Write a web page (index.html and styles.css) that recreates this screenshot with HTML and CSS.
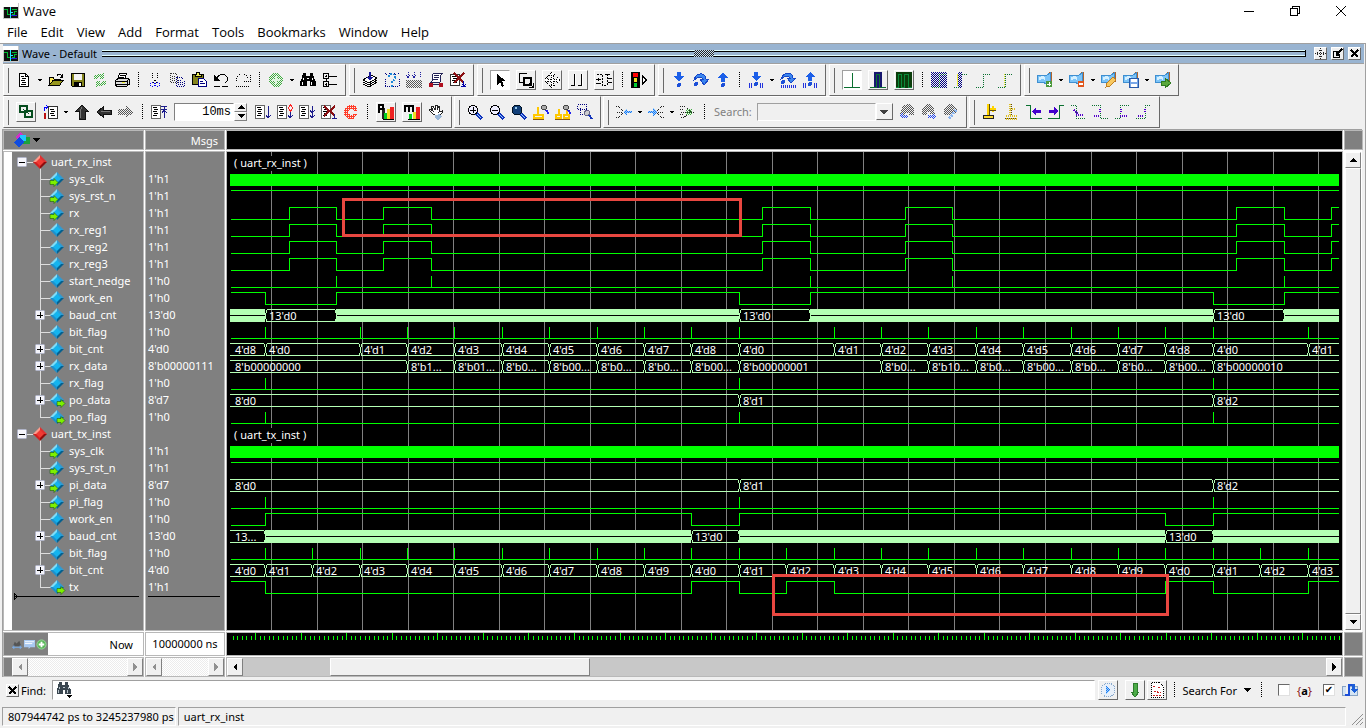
FILE: index.html
```html
<!DOCTYPE html>
<html lang="en">
<head>
    <meta charset="UTF-8">
    <title>Wave</title>
    <link rel="stylesheet" href="styles.css">
</head>
<body>
<svg class="sprite" aria-hidden="true">
    <defs>
        <pattern id="p-gray" width="2" height="2" patternUnits="userSpaceOnUse"><path d="M0 0h1v1h-1zM1 1h1v1h-1z" fill="#555"/></pattern>
        <pattern id="p-green" width="2" height="2" patternUnits="userSpaceOnUse"><path d="M0 0h1v1h-1zM1 1h1v1h-1z" fill="#3fae3f"/></pattern>
        <pattern id="p-navy" width="2" height="2" patternUnits="userSpaceOnUse"><path d="M0 0h1v1h-1zM1 1h1v1h-1z" fill="#000080"/></pattern>
        <pattern id="p-blue" width="2" height="2" patternUnits="userSpaceOnUse"><path d="M0 0h1v1h-1zM1 1h1v1h-1z" fill="#2244ee"/></pattern>
        <pattern id="p-sky" width="2" height="2" patternUnits="userSpaceOnUse"><path d="M0 0h2v2h-2z" fill="#9cd0ff"/><path d="M0 0h1v1h-1zM1 1h1v1h-1z" fill="#1c78f0"/></pattern>
        <pattern id="p-red" width="2" height="2" patternUnits="userSpaceOnUse"><path d="M0 0h2v1h-1v1h-1z" fill="#ff3c28"/></pattern>
    </defs>
    <symbol id="i-app" viewBox="0 0 16 16"><path fill="#c8c8c8" d="M0 0h16v16H0z"/><path fill="#fff" d="M0 0h15v4H0z"/><path fill="#111" d="M1 4h14v11H1z"/><path fill="none" stroke="#0b3" d="M1 6.500h3v5h3M9 6.500h5M9 11.500h2v-3h3"/><path fill="none" stroke="#2ef" d="M7.500 4v11M8 9.500h2"/><path fill="none" stroke="#22d" d="M8 12.500h6"/></symbol>
    <symbol id="i-new" viewBox="0 0 16 16"><path d="M3.500 1.500h6l3 3v10h-9z" fill="#fff" stroke="#000"/><path d="M9.500 1.500v3h3M5 4.500h3M6 6.500h4M5 8.500h4M6 10.500h4M5 12.500h5" fill="none" stroke="#000"/></symbol>
    <symbol id="i-open" viewBox="0 0 16 16"><path d="M1 13V5h4l1 2h6v2" fill="#ffec5c" stroke="#000"/><path d="M1 13.500 5 8.500h10l-3.500 5z" fill="#96961c" stroke="#000"/><path d="M9 3.500q3-3 5 1M14.500 2v3h-3" fill="none" stroke="#000"/></symbol>
    <symbol id="i-save" viewBox="0 0 16 16"><path d="M1.500 1.500h13v13h-12l-1-1z" fill="#84841c" stroke="#000"/><path d="M4 2h8v6H4z" fill="#f4f4f4"/><path d="M4 10h8v4H4z"/><path d="M9 11h2v3H9z" fill="#fff"/></symbol>
    <symbol id="i-reload" viewBox="0 0 16 16"><path d="M1 7q2-6 8-5l3-1v6H7l2-2q-3 0-4 2zM15 9q-2 6-8 5l-3 1V9h5l-2 2q3 0 4-2z" fill="url(#p-green)"/></symbol>
    <symbol id="i-print" viewBox="0 0 16 16"><path d="M5.500 1.500h7l-2 6h-7z" fill="#fff" stroke="#000"/><path d="M6 3.500h5M5 5.500h5" stroke="#000"/><path d="M1.500 8.500 4 6.500h10l1 1v5l-3 2H2.500l-1-2z" fill="#ddd" stroke="#000"/><path d="M1 9.500h12M2 12.500h11M13.500 8v6" stroke="#000"/><path d="M8 10h3v1H8z" fill="#ee3"/></symbol>
    <symbol id="i-cut" viewBox="0 0 16 16"><g fill="none" stroke-dasharray="1 1"><path d="M5.500 1v4l4 6M10.500 1v4l-4 6" stroke="#000"/><circle cx="5.500" cy="12.500" r="2" stroke="#00f"/><circle cx="10.500" cy="12.500" r="2" stroke="#00f"/></g></symbol>
    <symbol id="i-copy" viewBox="0 0 16 16"><g fill="none" stroke-dasharray="1 1"><path d="M1.500 1.500h5l2 2v7h-7zM3 4.500h3M3 6.500h4M3 8.500h4" stroke="#333"/><path d="M7.500 5.500h5l3 3v6h-8zM9 8.500h3M9 10.500h5M9 12.500h5" stroke="#000080"/></g></symbol>
    <symbol id="i-paste" viewBox="0 0 16 16"><path d="M1.500 2.500h11v10h-11z" fill="#84841c" stroke="#000"/><path d="M4 2.500h1l1-2h2l1 2h1v2H4z" fill="#ee5" stroke="#000"/><path d="M7.500 6.500h5l3 3v5h-8z" fill="#fff" stroke="#000080"/><path d="M9 9.500h3M9 11.500h5" stroke="#000080"/></symbol>
    <symbol id="i-undo" viewBox="0 0 16 16"><path d="M4 6q3-5 8-3 5 4 0 8" fill="none" stroke="#000"/><path d="M1 3v6h6z"/><path d="M9 14.500h6M1 14.500h6" stroke="#000"/></symbol>
    <symbol id="i-redo" viewBox="0 0 16 16"><g fill="none" stroke="#000" stroke-dasharray="1 1"><path d="M13 6Q8-1 3 4q-3 4 0 7M15.500 3v6H9M1 14.500h14"/></g></symbol>
    <symbol id="i-plus" viewBox="0 0 16 16"><circle cx="8" cy="8" r="7" fill="url(#p-green)"/><path d="M7 4h2v3h3v2H9v3H7V9H4V7h3z" fill="#dff5df"/></symbol>
    <symbol id="i-find" viewBox="0 0 16 16"><path d="M3 1h3v3h4V1h3l1 5 2 4v4h-6V9H7v5H0v-4l2-4z"/><path d="M3.500 6v2M2.500 10v3M12.500 6v2M11.500 10v3M7 6.500h2" stroke="#fff"/></symbol>
    <symbol id="i-find2" viewBox="0 0 16 16"><path d="M3 0h3v3h3V0h3l1 5 2 3v4H9V8H7v4H1V8l1-3z" fill="#3a4650"/><path d="M3.500 5v2M2.500 8v3M12.500 5v2M11.500 8v3M7 5.500h2" stroke="#b8c4cc"/><path d="M11 13h5l-2.500 3z"/></symbol>
    <symbol id="i-tree" viewBox="0 0 16 16"><path d="M1.500 1.500h5v5h-5zM1.500 9.500h5v5h-5zM7 4.500h8M7 12.500h8M3 4.500h2M3 12.500h2M4.500 7v3M4.500 3v2M4.500 11v3" fill="none" stroke="#000"/></symbol>
    <symbol id="i-stack" viewBox="0 0 16 16"><path d="M1 12l6 3 8-5M1 10l6 3 8-5M1 8l6 3 8-5-6-3z" fill="#fff" stroke="#000"/><path d="M7 0h2v5h2L8 9 5 5h2z" fill="#1a1a9a"/></symbol>
    <symbol id="i-ask" viewBox="0 0 16 16"><path d="M1 14.500h14M1.500 7v7M15.500 7v7M1 1l2 2M5 1l2 2M10 1l2 2M14 1l1 2" stroke="#000080" stroke-dasharray="1 1" fill="none"/><path d="M5 5q0-3 3-3t3 3-3 4v2M8 13v2" fill="none" stroke="#1c86d8" stroke-width="2" stroke-dasharray="2 1"/></symbol>
    <symbol id="i-rain" viewBox="0 0 16 16"><path d="M2.500 0v5M8.500 0v5M14.500 0v5M0 3l2 3 2-3M6 3l2 3 2-3" fill="none" stroke="#2020a0" stroke-dasharray="1 1"/><path d="M0 8h16v8H0z" fill="url(#p-gray)"/></symbol>
    <symbol id="i-cart" viewBox="0 0 16 16"><path d="M5 1.500h9q-2 2-2 9H3q2-2 2-9z" fill="#fff" stroke="#225"/><path d="M6 3.500h5M6 5.500h5M5 7.500h5M1 12.500h14" stroke="#225"/><circle cx="3" cy="13" r="2.500" fill="#b01020"/><circle cx="13" cy="13" r="2.500" fill="#b01020"/></symbol>
    <symbol id="i-end" viewBox="0 0 16 16"><path d="M.5 2.500h9v11h-9z" fill="#fff" stroke="#333"/><path d="M2 4.500h4M3 6.500h4M2 8.500h4M3 10.500h4" stroke="#000"/><path d="M4 1l10 10M14 1 4 11" stroke="#8b0f12" stroke-width="2"/><path d="M13.500 9v5M11 14.500h5M12 12l2 2 2-2" stroke="#00a" fill="none"/></symbol>
    <symbol id="i-arrow" viewBox="0 0 16 16"><path d="M5 2v11l3-3 2 5 2-1-2-5h4z"/></symbol>
    <symbol id="i-zoombox" viewBox="0 0 16 16"><path d="M9 1.500H1.500V10H5" fill="none" stroke="#000"/><path d="M6 6h7v7H6z" fill="none" stroke="#000" stroke-width="2"/><path d="M11 11l4 4M15.500 11v4.500H11" stroke="#000" fill="none"/></symbol>
    <symbol id="i-pan" viewBox="0 0 16 16"><path d="M8 0 5 3h2v4H3V5L0 8l3 3V9h4v4H5l3 3 3-3H9V9h4v2l3-3-3-3v2H9V3h2z" fill="#fff" stroke="#000" stroke-dasharray="1 1"/></symbol>
    <symbol id="i-cursors" viewBox="0 0 16 16"><path d="M4.500 2v11M1 13.500h4M11.500 2v11M8 13.500h4" stroke="#000" fill="none"/><path d="M5.500 2v11M12.500 2v12" stroke="#fff"/></symbol>
    <symbol id="i-edit" viewBox="0 0 16 16"><path d="M1 2.500h5.500v11h4M11.500 2v12M9 2.500h6" fill="none" stroke="#000" stroke-dasharray="2 1"/><path d="M0 7.500h5M0 11.500h5M2.500 6v3M12 6.500h4M12 10.500h4" stroke="#000"/></symbol>
    <symbol id="i-light" viewBox="0 0 16 16"><path d="M0 0h9v16H0z"/><circle cx="4.500" cy="3" r="2.500" fill="#f00"/><circle cx="4.500" cy="8" r="2" fill="#ed2"/><circle cx="4.500" cy="13" r="2" fill="#0c3"/><path d="M11.500 4v8l4-4z" fill="#fff" stroke="#000"/></symbol>
    <symbol id="i-down" viewBox="0 0 16 16"><path d="M6 0h4v4h3L8 10 3 4h3z" fill="#1c5fe8"/><circle cx="8" cy="13" r="2" fill="#1c4fd8"/></symbol>
    <symbol id="i-over" viewBox="0 0 16 16"><path d="M1 8Q3 1 9 2q4 1 4 5h3l-5 6-4-6h3Q8 3 1 8z" fill="#3b86ee" stroke="#1746c8"/><circle cx="3" cy="12" r="2" fill="#1c4fd8"/></symbol>
    <symbol id="i-up" viewBox="0 0 16 16"><path d="M6 10h4V6h3L8 0 3 6h3z" fill="#1c5fe8"/><circle cx="8" cy="13" r="2" fill="#1c4fd8"/></symbol>
    <symbol id="i-down2" viewBox="0 0 16 16"><path d="M6 0h4v4h3L8 9 3 4h3z" fill="#1c5fe8"/><circle cx="8" cy="12" r="2" fill="#1c4fd8"/><path d="M1.500 11v5M3.500 11v5M12.500 11v5M14.500 11v5" stroke="#23d"/></symbol>
    <symbol id="i-over2" viewBox="0 0 16 16"><path d="M1 7Q3 1 9 1q4 1 4 5h3l-5 5-4-5h3Q8 2 1 7z" fill="#3b86ee" stroke="#1746c8"/><circle cx="3" cy="10" r="2" fill="#1c4fd8"/><path d="M1 14.500h15" stroke="#23d" stroke-width="3" stroke-dasharray="1 1"/></symbol>
    <symbol id="i-up2" viewBox="0 0 16 16"><path d="M6 9h4V5h3L8 0 3 5h3z" fill="#1c5fe8"/><circle cx="8" cy="12" r="2" fill="#1c4fd8"/><path d="M1.500 11v5M3.500 11v5M12.500 11v5M14.500 11v5" stroke="#23d"/></symbol>
    <symbol id="i-w1" viewBox="0 0 16 16"><path d="M0 15.500h16M8.500 1v14" stroke="#0a7030"/></symbol>
    <symbol id="i-w2" viewBox="0 0 16 16"><path d="M4 0h8v16H4z" fill="#16166e"/><path d="M0 15.500h6.500v-13h3v13H16" fill="none" stroke="#0a7030"/></symbol>
    <symbol id="i-w3" viewBox="0 0 16 16"><path d="M0 0h16v16H0z" fill="#0b3d0b"/><path d="M0 15.500h2.500v-13h3v13h3v-13h4v13H16" fill="none" stroke="#0a8a3a"/></symbol>
    <symbol id="i-s1" viewBox="0 0 16 16"><path d="M0 0h16v16H0z" fill="url(#p-navy)"/><path d="M1 15.500h7.500v-13H15" fill="none" stroke="#0a7030" stroke-dasharray="1 1"/></symbol>
    <symbol id="i-s2" viewBox="0 0 16 16"><path d="M5 0h4v16H5z" fill="url(#p-navy)"/><path d="M4.500 2v12" stroke="#ee3"/><path d="M1 15.500h5M9 2.500h6" stroke="#0a7030" stroke-dasharray="1 1"/></symbol>
    <symbol id="i-s3" viewBox="0 0 16 16"><path d="M1 15.500h7.500v-13H15" fill="none" stroke="#0a7030" stroke-dasharray="1 1"/></symbol>
    <symbol id="i-s4" viewBox="0 0 16 16"><path d="M1 15.500h7.500v-13H15" fill="none" stroke="#0a7030" stroke-dasharray="1 1"/><path d="M7.500 2v13" stroke="#dd2" stroke-dasharray="1 1"/></symbol>
    <symbol id="i-book" viewBox="0 0 16 16"><path d="M12 0h3v10h-3z" fill="#b0642c"/><path d="M0 4l5-1 4 1 4-3v8l-3 3-5-2-5 1z" fill="#7cc4f8" stroke="#3f8fd0"/><path d="M2 5l3-1 3 1v3L5 7 2 8z" fill="#d5f0ff"/></symbol>
    <symbol id="i-book-add" viewBox="0 0 16 16"><use href="#i-book"/><circle cx="12" cy="12" r="3.500" fill="#4c9a3c"/><path d="M12 10v4M10 12h4" stroke="#fff"/></symbol>
    <symbol id="i-book-del" viewBox="0 0 16 16"><use href="#i-book"/><circle cx="12" cy="12" r="3.500" fill="#e0561c"/><path d="M10 12h4" stroke="#fff" stroke-width="2"/></symbol>
    <symbol id="i-book-edit" viewBox="0 0 16 16"><use href="#i-book"/><path d="M5 15l1-4 6-6 3 3-6 6z" fill="#f8c860" stroke="#c08020"/></symbol>
    <symbol id="i-book-save" viewBox="0 0 16 16"><use href="#i-book"/><path d="M6.500 6.500h9v9h-9z" fill="#7aa8e8" stroke="#2a5aa8"/><path d="M8 7h6v3H8zM8 12h6v3H8z" fill="#fff"/></symbol>
    <symbol id="i-book-go" viewBox="0 0 16 16"><use href="#i-book"/><path d="M6 9h4V6l6 5-6 5v-3H6z" fill="#5aa83c" stroke="#2f7a20"/></symbol>
    <symbol id="i-links" viewBox="0 0 16 16"><path d="M2 2h7v6H2zM7 7h7v6H7z" fill="none" stroke="#064d1e" stroke-width="2"/><path d="M5 5l6 5" stroke="#064d1e"/></symbol>
    <symbol id="i-step" viewBox="0 0 16 16"><path d="M6.500 2.500h9v12h-9z" fill="#fff" stroke="#333"/><path d="M8 5.500h4M9 7.500h4M8 9.500h4M9 11.500h4" stroke="#000"/><path d="M2 14h1V9" stroke="#b11" stroke-width="2" fill="none"/><path d="M2.500 7V3.500h3M4 1l2 2-2 2" stroke="#00f" fill="none"/></symbol>
    <symbol id="i-aup" viewBox="0 0 16 16"><path d="M5 15V7H2l6-6 6 6h-3v8z" fill="#333" stroke="#111"/><path d="M6 14V7l2-4" stroke="#777" fill="none"/></symbol>
    <symbol id="i-aleft" viewBox="0 0 16 16"><path d="M15 6H7V3L1 8l6 5v-3h8z" fill="#333" stroke="#111"/><path d="M14 7.500H5" stroke="#777"/></symbol>
    <symbol id="i-aright" viewBox="0 0 16 16"><path d="M0 5h8V2l8 6-8 6v-3H0z" fill="url(#p-gray)"/></symbol>
    <symbol id="i-page" viewBox="0 0 16 16"><path d="M.5 1.500h9v13h-9z" fill="#fff" stroke="#666"/><path d="M2 3.500h4M3 5.500h4M2 7.500h4M3 9.500h4M2 11.500h4" stroke="#000"/></symbol>
    <symbol id="i-restart" viewBox="0 0 16 16"><use href="#i-page"/><path d="M10 2.500h6M10 5.500h6M13.500 2v12M11 9l2-3 3 3" fill="none" stroke="#1c1c8c"/></symbol>
    <symbol id="i-run" viewBox="0 0 16 16"><use href="#i-page"/><path d="M13.500 2v11M11 11l2 3 3-3" fill="none" stroke="#1c1c8c"/></symbol>
    <symbol id="i-cont" viewBox="0 0 16 16"><use href="#i-page"/><path d="M13.500 6v8M11 11l2 3 3-3" fill="none" stroke="#1c1c8c"/><path d="M11 4l2.500-3L16 4l-2.500 3z" fill="none" stroke="#f22"/></symbol>
    <symbol id="i-runall" viewBox="0 0 16 16"><use href="#i-page"/><path d="M13.500 2v12M11 6l2 3 3-3M11 11l2 3 3-3" fill="none" stroke="#1c1c8c"/></symbol>
    <symbol id="i-break" viewBox="0 0 16 16"><use href="#i-page"/><path d="M3 2l11 10M14 2 3 12" stroke="#8b0f12" stroke-width="2"/><path d="M11 14.500h5M13.500 10v5" stroke="#1c1c8c"/></symbol>
    <symbol id="i-stop" viewBox="0 0 16 16"><path d="M5 1h6l3 3v3h-3L9 5H7L5 7v2l2 2h2l2-1h3l-3 5H5l-4-4V5z" fill="url(#p-red)"/></symbol>
    <symbol id="i-prof" viewBox="0 0 16 16"><path d="M4 4h3v11H4z" fill="#222"/><path d="M6 9h3v6H6z" fill="#0c2"/><path d="M9 5h3v10H9z" fill="#ed2"/><path d="M12 3h4v12h-4z" fill="#e22"/><path d="M5 15.500h11" stroke="#000"/><path d="M1 9V1h4v4H2" fill="none" stroke="#000" stroke-width="2"/></symbol>
    <symbol id="i-mem" viewBox="0 0 16 16"><path d="M5 10h3v5H5z" fill="#0c2"/><path d="M9 8h3v7H9z" fill="#ed2"/><path d="M12 3h4v12h-4z" fill="#e22"/><path d="M4 15.500h12" stroke="#000"/><path d="M1 8V2h8v6M5 2v6" fill="none" stroke="#000" stroke-width="2"/></symbol>
    <symbol id="i-hand" viewBox="0 0 16 16"><path d="M5 10 1 6l1-1 3 2-2-5h2l2 4V1h2v5l2-4 1 1-1 5 3-1v2l-3 4z" fill="#fff" stroke="#222"/><path d="M7 11l5-1 2 3-4 3-3-2z" fill="#9bb8d8"/></symbol>
    <symbol id="i-lens" viewBox="0 0 16 16"><path d="M9 9l6 6" stroke="#1133bb" stroke-width="3"/><path d="M10 10l4 4" stroke="#9cf"/></symbol>
    <symbol id="i-zin" viewBox="0 0 16 16"><use href="#i-lens"/><circle cx="6" cy="6" r="4.500" fill="#eef" stroke="#000"/><path d="M3 6.500h6M6.500 3v6" stroke="#000"/></symbol>
    <symbol id="i-zout" viewBox="0 0 16 16"><use href="#i-lens"/><circle cx="6" cy="6" r="4.500" fill="#eef" stroke="#000"/><path d="M3 6.500h6" stroke="#000"/></symbol>
    <symbol id="i-zfull" viewBox="0 0 16 16"><use href="#i-lens"/><circle cx="6" cy="6" r="5" fill="#123f78" stroke="#012"/><path d="M4 4h2" stroke="#9ce" stroke-width="2"/></symbol>
    <symbol id="i-zcur" viewBox="0 0 16 16"><path d="M5 3v8M1 11h9v3H1z" fill="none" stroke="#ffc800" stroke-width="2"/><path d="M0 15.500h11" stroke="#8a5a10"/><circle cx="11" cy="3.500" r="2.500" fill="#aaa" stroke="#444"/><path d="M13 6l3 4" stroke="#22e" stroke-width="2"/></symbol>
    <symbol id="i-zcur2" viewBox="0 0 16 16"><path d="M4 5v6M1 11h5v3H1zM12 5v6M9 11h5v3H9z" fill="none" stroke="#ffc800" stroke-width="2"/><path d="M0 15.500h15" stroke="#8a5a10"/><circle cx="11" cy="3.500" r="2.500" fill="#aaa" stroke="#444"/><path d="M13 6l3 4" stroke="#22e" stroke-width="2"/></symbol>
    <symbol id="i-zarea" viewBox="0 0 16 16"><path d="M.5.500h9v5h-9zM3.500 3.500v7h4" fill="none" stroke="#000080" stroke-dasharray="1 1"/><circle cx="10" cy="9" r="2.500" fill="#ccc" stroke="#668"/><path d="M12 11l3 4" stroke="#1133bb" stroke-width="2"/></symbol>
    <symbol id="i-m1" viewBox="0 0 16 16"><path d="M0 2.500h3l4 5M0 13.500h3l4-5M1 8.500h6" fill="none" stroke="#222" stroke-dasharray="1 1"/><path d="M7 8l4-4v3h5v2h-5v3z" fill="url(#p-sky)"/></symbol>
    <symbol id="i-m2" viewBox="0 0 16 16"><path d="M16 2.500h-3l-4 5M16 13.500h-3l-4-5M10 8.500h6" fill="none" stroke="#222" stroke-dasharray="1 1"/><path d="M9 8 5 4v3H0v2h5v3z" fill="url(#p-sky)"/></symbol>
    <symbol id="i-m3" viewBox="0 0 16 16"><path d="M0 2.500h4l7 5-7 6H0M0 5.500h4M0 10.500h4M1 8.500h14" fill="none" stroke="#222" stroke-dasharray="1 1"/><circle cx="9" cy="8" r="3.500" fill="url(#p-green)"/></symbol>
    <symbol id="i-fprev" viewBox="0 0 16 16"><path d="M4 2l4-2h3l4 4v7h-5V9H6v2H1z" fill="url(#p-gray)"/><path d="M0 12l4-3v2h5v3H4v2z" fill="url(#p-blue)"/></symbol>
    <symbol id="i-fnext" viewBox="0 0 16 16"><path d="M1 4l4-4h3l4 2 2 8H9V8H6v3H1z" fill="url(#p-gray)"/><path d="M16 12l-4-3v2H7v3h5v2z" fill="url(#p-blue)"/></symbol>
    <symbol id="i-fopt" viewBox="0 0 16 16"><path d="M1 4l4-4h4l6 5-3 5-3-2-3 3H1z" fill="url(#p-gray)"/><path d="M13 6l-7 9" stroke="#8ab4ee" stroke-width="3" stroke-dasharray="2 1"/></symbol>
    <symbol id="i-caddp" viewBox="0 0 16 16"><path d="M6 0v11M6 5h8M11 2v6" fill="none" stroke="#ffd400" stroke-width="2"/><path d="M7.500 0v11M8 6.500h6" stroke="#5a4a10"/><path d="M1.500 11.500h10v3h-10z" fill="#fd3" stroke="#222"/></symbol>
    <symbol id="i-cdel" viewBox="0 0 16 16"><path d="M6 0v11M6 5h6M2 12h11M2 15h11" fill="none" stroke="#e0c020" stroke-width="2" stroke-dasharray="1 1"/><path d="M7.500 0v11M1 14.500h12" stroke="#5a4a10" stroke-dasharray="1 1"/></symbol>
    <symbol id="i-eprev" viewBox="0 0 16 16"><path d="M0 1.500h4.500v13H16" fill="none" stroke="#0a7030"/><path d="M6 7l4-4v3h5v3h-5v3z" fill="#40c"/></symbol>
    <symbol id="i-enext" viewBox="0 0 16 16"><path d="M16 1.500h-4.500v13H0" fill="none" stroke="#0a7030"/><path d="M10 7 6 3v3H1v3h5v3z" fill="#40c"/></symbol>
    <symbol id="i-fall" viewBox="0 0 16 16"><path d="M1 1.500h5.500v13H16" fill="none" stroke="#0a7030" stroke-dasharray="1 1"/><path d="M4 6l4 4M6 11h8" stroke="#50c" stroke-width="2" stroke-dasharray="1 1"/></symbol>
    <symbol id="i-fall2" viewBox="0 0 16 16"><path d="M0 1.500h8.500v13H16" fill="none" stroke="#0a7030" stroke-dasharray="1 1"/><path d="M8 5v4M2 12h6" stroke="#50c" stroke-width="2" stroke-dasharray="1 1"/></symbol>
    <symbol id="i-rise" viewBox="0 0 16 16"><path d="M1 14.500h5.500v-13H15" fill="none" stroke="#0a7030" stroke-dasharray="1 1"/><path d="M7 5v4M6 12h8" stroke="#50c" stroke-width="2" stroke-dasharray="1 1"/></symbol>
    <symbol id="i-rise2" viewBox="0 0 16 16"><path d="M0 14.500h9.500v-13H15" fill="none" stroke="#0a7030" stroke-dasharray="1 1"/><path d="M9 5v4M2 12h6" stroke="#50c" stroke-width="2" stroke-dasharray="1 1"/></symbol>
    <symbol id="i-shapes" viewBox="0 0 16 16"><path d="M1 5l5-5 4 4-5 5z" fill="#d030c8"/><path d="M9 5h7v7H9z" fill="#1ca23c"/><circle cx="9" cy="6" r="3.500" fill="#20c8ff"/><path d="M0 10l5-5 5 5-5 6z" fill="#104ce0"/></symbol>
    <symbol id="i-fwd" viewBox="0 0 16 16"><circle cx="8" cy="8" r="7" fill="#e8f0fa" stroke="#88a8cc" stroke-dasharray="1 1"/><path d="M6 4l5 4-5 4z" fill="url(#p-sky)"/></symbol>
    <symbol id="i-green" viewBox="0 0 16 16"><path d="M6 1h4v9h2l-4 5-4-5h2z" fill="#4cab48" stroke="#2d7d2d"/></symbol>
    <symbol id="i-marks" viewBox="0 0 16 16"><path d="M2.500.5h8l4 4v11h-12z" fill="#fff" stroke="#000" stroke-dasharray="1 1"/><path d="M4 4l3 2M9 5l3 2M5 9l7 2M4 13h8" stroke="#c22" stroke-dasharray="2 1"/></symbol>
    <symbol id="i-wrap" viewBox="0 0 16 16"><path d="M.5 4.500h15v9H.5z" fill="#d4e4f4" stroke="#88a4c4"/><path d="M4 14V3h4v11z" fill="#f0f0f0"/><path d="M3 13h4V3h4" stroke="#1c4fd8" stroke-width="2" fill="none"/><path d="M10 2h3v5h3l-4 4-4-4h2z" fill="#1c5fd8"/></symbol>
    <symbol id="i-dock" viewBox="0 0 11 11"><path d="M5.500 0v11M0 5.500h11M4 2.500h3M4 8.500h3M2.500 4v3M8.500 4v3" stroke="#222" stroke-dasharray="1 1"/></symbol>
    <symbol id="i-undock" viewBox="0 0 11 11"><path d="M4 3.500H1.500v6h6V7" fill="none" stroke="#000"/><path d="M10 1 5 6M4.500 3v3.500H8" fill="none" stroke="#000" stroke-width="2"/></symbol>
    <symbol id="i-x" viewBox="0 0 11 11"><path d="M2 2l7 7M9 2 2 9" stroke="#000" stroke-width="2"/></symbol>
    <symbol id="i-tri-l" viewBox="0 0 8 8"><path d="M6 0v8L2 4z" fill="currentColor"/></symbol>
    <symbol id="i-tri-r" viewBox="0 0 8 8"><path d="M2 0v8l4-4z" fill="currentColor"/></symbol>
    <symbol id="i-tri-u" viewBox="0 0 8 8"><path d="M0 6h8L4 2z" fill="currentColor"/></symbol>
    <symbol id="i-tri-d" viewBox="0 0 8 8"><path d="M0 2h8L4 6z" fill="currentColor"/></symbol>
</svg>

<div class="window">
    <header class="titlebar">
        <svg class="icon"><use href="#i-app"/></svg>
        <span class="title">Wave</span>
        <div class="win-buttons">
            <button aria-label="Minimize"><svg viewBox="0 0 12 12"><path d="M1 6.500h10" stroke="#000"/></svg></button>
            <button aria-label="Restore"><svg viewBox="0 0 12 12"><path d="M1.500 3.500h7v7h-7zM3.500 3v-1.500h7v7H9" fill="none" stroke="#000"/></svg></button>
            <button aria-label="Close"><svg class="smooth" viewBox="0 0 12 12"><path d="M1 1l10 10M11 1 1 11" stroke="#000"/></svg></button>
        </div>
    </header>
    <nav class="menu">
        <a href="#">File</a><a href="#">Edit</a><a href="#">View</a><a href="#">Add</a><a href="#">Format</a><a href="#">Tools</a><a href="#">Bookmarks</a><a href="#">Window</a><a href="#">Help</a>
    </nav>

    <div class="dock">
        <div class="dock-title">
            <svg class="icon"><use href="#i-app"/></svg>
            <span>Wave - Default</span>
            <div class="rails"><i></i></div>
            <button class="mini" aria-label="Dock"><svg><use href="#i-dock"/></svg></button>
            <button class="mini" aria-label="Undock"><svg><use href="#i-undock"/></svg></button>
            <button class="mini" aria-label="Close pane"><svg><use href="#i-x"/></svg></button>
        </div>

        <div class="tool-row" id="row1"></div>
        <div class="tool-row" id="row2"></div>

        <main class="panes">
            <div class="cell head names-head"><svg class="icon"><use href="#i-shapes"/></svg><svg class="tri"><use href="#i-tri-d"/></svg></div>
            <div class="cell head msgs">Msgs</div>
            <div class="cell black"></div>
            <div class="cell head"></div>

            <div class="cell names"><ul id="names"></ul><div class="insert"><svg viewBox="0 0 4 7"><path d="M.5.500v6l3-3z" fill="none" stroke="#000"/></svg></div></div>
            <div class="cell values"><ul id="values"></ul><div class="insert"></div></div>
            <div class="cell black"><svg id="wave" class="wave"></svg></div>
            <div class="vscroll">
                <button aria-label="Scroll up"><svg><use href="#i-tri-u"/></svg></button>
                <div class="thumb"></div>
                <button aria-label="Scroll down"><svg><use href="#i-tri-d"/></svg></button>
            </div>

            <div class="cell now">
                <div class="now-tools">
                    <svg viewBox="0 0 12 12"><path d="M1 8l2-5 2 2 3-3 2 6z" fill="#555"/><path d="M0 9h11M2 7v4M9 7v4" stroke="#7ab0f0"/></svg>
                    <svg viewBox="0 0 12 12"><path d="M0 1h12v8H7l-2 2V9H0z" fill="#a8c8f0"/><path d="M1 3h10M1 5h8" stroke="#fff"/></svg>
                    <svg viewBox="0 0 12 12"><circle cx="6" cy="6" r="5" fill="#5cb85c" stroke="#9d9"/><path d="M6 3v6M3 6h6" stroke="#fff" stroke-width="2"/></svg>
                </div>
                <span>Now</span>
            </div>
            <div class="cell now-time">10000000 ns</div>
            <div class="cell black"><svg id="ruler" class="wave"></svg></div>
            <div class="cell head"></div>

            <div class="cell hscroll off edge"><button disabled aria-label="Names left"><svg><use href="#i-tri-l"/></svg></button><div class="track"></div><button disabled aria-label="Names right"><svg><use href="#i-tri-r"/></svg></button></div>
            <div class="cell hscroll off"><button disabled aria-label="Values left"><svg><use href="#i-tri-l"/></svg></button><div class="track"></div><button disabled aria-label="Values right"><svg><use href="#i-tri-r"/></svg></button></div>
            <div class="cell hscroll"><button aria-label="Wave left"><svg><use href="#i-tri-l"/></svg></button><div class="track"><div class="thumb"></div></div><button aria-label="Wave right"><svg><use href="#i-tri-r"/></svg></button></div>
            <div class="cell head"></div>
        </main>

        <div class="findbar">
            <button class="mini" aria-label="Close find"><svg><use href="#i-x"/></svg></button>
            <label for="find">Find:</label>
            <div class="find-field">
                <svg class="icon"><use href="#i-find2"/></svg>
                <input id="find" type="text">
            </div>
            <button class="framed" aria-label="Find next"><svg class="icon"><use href="#i-fwd"/></svg></button>
            <span class="space"></span>
            <button class="framed" aria-label="Search down"><svg class="icon"><use href="#i-green"/></svg></button>
            <button class="framed" aria-label="Mark all"><svg class="icon"><use href="#i-marks"/></svg></button>
            <i class="sep"></i>
            <button class="search-for">Search For <svg class="tri"><use href="#i-tri-d"/></svg></button>
            <i class="sep"></i>
            <label class="check"><input type="checkbox"><b class="brace">{</b><b>a</b><b class="brace">}</b></label>
            <label class="check"><input type="checkbox" checked aria-label="Wrap"><svg class="icon"><use href="#i-wrap"/></svg></label>
        </div>
    </div>

    <footer class="status">
        <span>807944742 ps to 3245237980 ps</span>
        <span class="grow">uart_rx_inst</span>
        <svg class="grip" viewBox="0 0 16 16"><path d="M15 4 4 15M15 8l-7 7M15 12l-3 3" stroke="#909090"/></svg>
    </footer>
</div>
<script src="script.js"></script>
</body>
</html>
```
FILE: styles.css
```css
*{
    margin: 0;
    padding: 0;
    box-sizing: border-box;
}
html, body{
    height: 100%;
}
body{
    font: 11px/17px "Noto Sans", "DejaVu Sans Condensed", sans-serif;
    color: #000;
    background: #fff;
    overflow: hidden;
}
li{
    list-style: none;
}
a{
    color: inherit;
    text-decoration: none;
}
button{
    font: inherit;
    color: inherit;
    border: 0;
    background: none;
    display: flex;
    align-items: center;
    justify-content: center;
    flex: none;
}
svg{
    display: block;
    flex: none;
    shape-rendering: crispEdges;
}
.sprite{
    position: absolute;
    width: 0;
    height: 0;
}
.smooth{
    shape-rendering: auto;
}
.icon{
    width: 16px;
    height: 16px;
}
.tri{
    width: 8px;
    height: 8px;
}
.window{
    height: 100vh;
    display: flex;
    flex-direction: column;
}

/* title and menu */
.titlebar{
    height: 22px;
    display: flex;
    align-items: center;
    gap: 4px;
    padding: 0 2px 0 3px;
    font: 13px/20px "Open Sans", sans-serif;
}
.titlebar .title{
    flex: 1;
}
.win-buttons{
    display: flex;
}
.win-buttons button{
    width: 46px;
    height: 20px;
}
.win-buttons svg{
    width: 12px;
    height: 12px;
}
.menu{
    height: 21px;
    display: flex;
    gap: 13px;
    padding-left: 7px;
    font: 13px/21px "Open Sans", sans-serif;
}

/* docked pane */
.dock{
    flex: 1;
    min-height: 0;
    display: flex;
    flex-direction: column;
    background: #f0f0f0;
    border: 1px solid #a0a0a0;
    border-width: 1px 1px 0 0;
    padding: 0 3px 0 3px;
}
.dock-title{
    height: 20px;
    display: flex;
    align-items: center;
    gap: 3px;
    background: #99b4d1;
    border-bottom: 1px solid #a0a0a0;
    padding: 0 3px 0 0;
    margin-right: -2px;
}
.rails{
    flex: 1;
    height: 7px;
    margin: 0 4px 0 2px;
    border: solid #000;
    border-width: 0 1px 1px 0;
    background: linear-gradient(#e0ffff 1px, #000 1px, #000 2px, #99b4d1 2px, #99b4d1 5px, #e0ffff 5px);
    display: flex;
    justify-content: center;
}
.rails i{
    width: 20px;
    height: 7px;
    background: #99b4d1 repeating-conic-gradient(#222 0 25%, #c8e0f4 0 50%) 0 0 / 2px 2px;
}
.mini{
    width: 13px;
    height: 13px;
    background: #f0f0f0;
    border: 1px solid;
    border-color: #fff #696969 #696969 #fff;
}
.dock-title .mini{
    margin-left: 1px;
}
.mini svg{
    width: 11px;
    height: 11px;
}

/* toolbars */
.tool-row{
    height: 32px;
    display: flex;
    gap: 3px;
}
#row2{
    gap: 2px;
}
.toolbar{
    display: flex;
    align-items: center;
    border: 1px solid;
    border-color: #fff #696969 #696969 #fff;
    padding: 0 4px 1px 9px;
    background: linear-gradient(#696969, #696969) 4px 3px / 1px 25px no-repeat;
}
.tool{
    width: 22px;
    height: 22px;
}
.drop{
    width: 10px;
    height: 22px;
}
.drop svg{
    width: 6px;
    height: 6px;
}
.framed{
    width: 20px;
    height: 20px;
    border: 1px solid;
    border-color: #fff #696969 #696969 #fff;
}
.toolbar .framed{
    margin: 0 3px;
}
.framed.on{
    background: #fff;
    border-color: #a0a0a0 #fff #fff #a0a0a0;
}
.sep{
    width: 11px;
    height: 16px;
    flex: none;
    background: repeating-linear-gradient(#000 0 1px, transparent 1px 2px) 5px 0 / 1px 16px no-repeat;
}
.runlen{
    display: flex;
    margin: 0 5px 0 4px;
}
.runlen input{
    width: 60px;
    height: 18px;
    border: 1px solid;
    border-color: #808080 #fff #fff #808080;
    text-align: right;
    font: 12px "Liberation Mono", monospace;
    padding-right: 2px;
}
.spin button{
    width: 13px;
    height: 9px;
    border: 1px solid;
    border-color: #fff #808080 #808080 #fff;
}
.spin svg{
    width: 8px;
    height: 8px;
}
.combo{
    display: flex;
    align-items: center;
    color: #808080;
    margin: 0 3px 0 4px;
}
.combo input{
    width: 119px;
    height: 18px;
    margin-left: 5px;
    border: 1px solid;
    border-color: #a0a0a0 #fff #fff #a0a0a0;
    background: #f0f0f0;
}
.combo button{
    width: 17px;
    height: 17px;
    border: 1px solid;
    border-color: #fff #696969 #696969 #fff;
    color: #404040;
}
.combo svg{
    width: 10px;
    height: 10px;
}

/* signal panes */
.panes{
    flex: 1;
    min-height: 0;
    display: grid;
    grid-template-columns: 139px 78px minmax(0, 1fr) 17px;
    grid-template-rows: 18px minmax(0, 1fr) 22px 18px;
    gap: 3px;
    margin: 1px 0 0 -1px;
    padding: 1px 0 1px 1px;
    border-top: 1px solid #a0a0a0;
    border-left: 1px solid #a0a0a0;
    background: #fff;
}
.cell{
    overflow: hidden;
    color: #fff;
    background: #808080;
    outline: 1px solid #b8b8b8;
}
.head{
    display: flex;
    align-items: center;
}
.names-head{
    gap: 2px;
    padding-left: 10px;
    color: #000;
}
.msgs{
    justify-content: flex-end;
    padding-right: 6px;
}
.black{
    background: #000;
}
.names{
    border-left: 8px solid #fff;
    padding-top: 1px;
}
.values{
    padding-top: 1px;
}
.values li{
    height: 17px;
    padding-left: 2px;
}
.names li{
    height: 17px;
    display: flex;
    white-space: nowrap;
}
.names .root svg{
    width: 39px;
}
.names li svg{
    width: 57px;
    height: 17px;
    shape-rendering: auto;
}
.insert{
    height: 7px;
    margin: -2px 4px 0 2px;
    background: linear-gradient(#000, #000) 0 3px / 100% 1px no-repeat;
}
.insert svg{
    width: 4px;
    height: 7px;
}
.wave{
    width: 100%;
    height: 100%;
    font-size: 11px;
}
.wave text{
    fill: #fff;
}
.trace{
    fill: none;
    stroke: #00ff00;
}
.bus{
    fill: none;
    stroke: #b4ffb4;
}
.gridline{
    stroke: #808080;
}
.callout{
    fill: none;
    stroke: #e84740;
    stroke-width: 3;
}
.now{
    background: #fff;
    color: #000;
    display: flex;
    align-items: center;
    justify-content: space-between;
    padding-right: 10px;
}
.now-tools{
    width: 44px;
    height: 22px;
    display: flex;
    align-items: center;
    gap: 1px;
    padding-left: 8px;
    background: #808080;
}
.now-tools svg{
    width: 11px;
    height: 11px;
    shape-rendering: auto;
}
.now-time{
    background: #fff;
    color: #000;
    line-height: 22px;
    text-align: center;
}
.vscroll{
    display: flex;
    flex-direction: column;
    width: 16px;
    background: #c8c8c8;
}
.vscroll button, .hscroll button, .thumb{
    background: #f0f0f0;
    border: 1px solid;
    border-color: #fff #808080 #808080 #fff;
}
.vscroll button{
    height: 16px;
    width: 16px;
}
.vscroll .thumb{
    flex: 1;
}
.vscroll svg, .hscroll svg{
    width: 8px;
    height: 8px;
}
.hscroll{
    display: flex;
    background: #f0f0f0;
    color: #000;
}
.edge{
    border-left: 8px solid #808080;
}
.hscroll button{
    width: 16px;
}
.track{
    flex: 1;
    background: #c8c8c8;
}
.track .thumb{
    width: 24%;
    height: 100%;
    margin-left: 8%;
}
.hscroll.off button{
    color: #909090;
}
.off .track{
    background: repeating-conic-gradient(#fff 0 25%, #ececec 0 50%) 0 0 / 2px 2px;
}

/* find bar and status line */
.findbar{
    height: 29px;
    display: flex;
    align-items: center;
    gap: 2px;
    padding: 0 4px 3px 3px;
}
.find-field{
    flex: 1;
    height: 20px;
    display: flex;
    align-items: center;
    gap: 3px;
    margin: 0 1px 0 4px;
    padding-left: 3px;
    background: #fff;
    border: 1px solid;
    border-color: #a0a0a0 #fff #fff #a0a0a0;
}
.find-field input{
    flex: 1;
    border: 0;
    outline: 0;
    font: inherit;
}
.space{
    width: 3px;
}
.search-for{
    gap: 6px;
    padding: 0 3px 0 0;
}
.check{
    display: flex;
    align-items: center;
    margin-left: 9px;
}
.check input{
    appearance: none;
    width: 12px;
    height: 12px;
    margin-right: 7px;
    background: #fff;
    border: 1px solid;
    border-color: #696969 #e0e0e0 #e0e0e0 #696969;
}
.check input:checked::before{
    content: "✔";
    display: block;
    font: 10px/10px "DejaVu Sans", sans-serif;
    text-align: center;
}
.brace{
    color: #8b1010;
    font-weight: normal;
}
.status{
    height: 22px;
    display: flex;
    gap: 2px;
    padding: 1px 1px 2px 2px;
    background: #f0f0f0;
    border-right: 1px solid #a0a0a0;
}
.status span{
    padding: 0 1px 0 5px;
    line-height: 17px;
    border: 1px solid;
    border-color: #a0a0a0 #fff #fff #a0a0a0;
}
.status .grow{
    flex: 1;
}
.grip{
    width: 16px;
    height: 16px;
    align-self: flex-end;
    shape-rendering: auto;
}
```
FILE: script.js
```javascript
// toolbars: plain name = icon, "f:" = framed button, "on:" = pressed, "v" = drop arrow, "|" = separator
var row1 = [
    "new v open save reload print | cut copy paste undo redo | plus v find tree",
    "stack ask rain cart end",
    "on:arrow f:zoombox f:pan f:cursors f:edit | light",
    "down over up | down2 v over2 up2",
    "on:w1 f:w2 f:w3 | s1 s2 s3 s4",
    "book-add v book-del v book-edit book-save v book-go"
];
var row2 = [
    "f:links step v aup aleft aright | restart RUN run cont runall break stop | f:prof f:mem hand",
    "zin zout zfull zcur zcur2 zarea",
    "m1 v m2 v m3 | SEARCH fprev fnext fopt",
    "caddp cdel eprev enext fall fall2 rise rise2"
];
var RUN = '<div class="runlen"><input type="text" value="10ms" aria-label="Run length">' +
    '<div class="spin"><button aria-label="More"><svg><use href="#i-tri-u"/></svg></button>' +
    '<button aria-label="Less"><svg><use href="#i-tri-d"/></svg></button></div></div>';
var SEARCH = '<div class="combo"><label for="search">Search:</label><input id="search" type="text" disabled>' +
    '<button disabled aria-label="Search history"><svg><use href="#i-tri-d"/></svg></button></div>';

function tool(t){
    if(t == "|") return '<i class="sep"></i>';
    if(t == "v") return '<button class="drop" aria-label="More options"><svg><use href="#i-tri-d"/></svg></button>';
    if(t == "RUN") return RUN;
    if(t == "SEARCH") return SEARCH;
    var p = t.split(":");
    var name = p.pop();
    var cls = p[0] == "on" ? "framed on" : p[0] == "f" ? "framed" : "tool";
    return '<button class="' + cls + '" aria-label="' + name + '"><svg class="icon"><use href="#i-' + name + '"/></svg></button>';
}
function fillRow(id, bars){
    document.getElementById(id).innerHTML = bars.map(function(b){
        return '<div class="toolbar">' + b.split(" ").map(tool).join("") + '</div>';
    }).join("");
}
fillRow("row1", row1);
fillRow("row2", row2);

// bit times, in pixels from the left of the wave pane
var START = 3, END = 1112;
var B = [38, 85, 133, 180, 227, 275, 322, 370, 417, 464, 512, 559, 607, 654, 701, 749, 796, 844, 891, 938, 986, 1033, 1081];
function pick(list){
    return list.map(function(i){ return B[i]; });
}
var rxBits = pick([0, 2, 3, 4, 5, 6, 7, 8, 9, 10, 12, 13, 14, 15, 16, 17, 18, 19, 20, 22]);
var rxEdges = [62, 109, 156, 204, 535, 583, 678, 725, 1009, 1057, 1104];
var frames = [38, 512, 986];
var d = function(list){ return list.split(" ").map(function(n){ return "4'd" + n; }); };

// port: 1 input, 2 output
var signals = [
    {name: "uart_rx_inst", root: 1},
    {name: "sys_clk", val: "1'h1", port: 1, clk: 1},
    {name: "sys_rst_n", val: "1'h1", port: 1, level: 1, at: []},
    {name: "rx", val: "1'h1", port: 1, level: 0, at: rxEdges},
    {name: "rx_reg1", val: "1'h1", level: 0, at: rxEdges},
    {name: "rx_reg2", val: "1'h1", level: 0, at: rxEdges},
    {name: "rx_reg3", val: "1'h1", level: 0, at: rxEdges},
    {name: "start_nedge", val: "1'h0", spikes: [109, 204, 583, 725, 1057]},
    {name: "work_en", val: "1'h0", level: 1, at: [38, 109, 512, 583, 986, 1057]},
    {name: "baud_cnt", val: "13'd0", at: [38, 109, 512, 583, 986, 1057], bus: ["#", "13'd0", "#", "13'd0", "#", "13'd0", "#"]},
    {name: "bit_flag", val: "1'h0", spikes: rxBits},
    {name: "bit_cnt", val: "4'd0", at: rxBits, bus: d("8 0 1 2 3 4 5 6 7 8 0 1 2 3 4 5 6 7 8 0 1")},
    {name: "rx_data", val: "8'b00000111", at: pick([3, 4, 5, 6, 7, 8, 9, 10, 13, 14, 15, 16, 17, 18, 19, 20]),
        bus: ["8'b00000000", "8'b1...", "8'b01...", "8'b0...", "8'b00...", "8'b0...", "8'b0...", "8'b00...", "8'b00000001",
            "8'b0...", "8'b10...", "8'b0...", "8'b00...", "8'b0...", "8'b0...", "8'b00...", "8'b00000010"]},
    {name: "rx_flag", val: "1'h0", spikes: frames},
    {name: "po_data", val: "8'd7", port: 2, at: [512, 986], bus: ["8'd0", "8'd1", "8'd2"]},
    {name: "po_flag", val: "1'h0", port: 2, spikes: frames, last: 1},
    {name: "uart_tx_inst", root: 1},
    {name: "sys_clk", val: "1'h1", port: 1, clk: 1},
    {name: "sys_rst_n", val: "1'h1", port: 1, level: 1, at: []},
    {name: "pi_data", val: "8'd7", port: 1, at: [512, 986], bus: ["8'd0", "8'd1", "8'd2"]},
    {name: "pi_flag", val: "1'h0", port: 1, spikes: frames},
    {name: "work_en", val: "1'h0", level: 0, at: [38, 464, 512, 938, 986]},
    {name: "baud_cnt", val: "13'd0", at: [38, 464, 512, 938, 986], bus: ["13...", "#", "13'd0", "#", "13'd0", "#"]},
    {name: "bit_flag", val: "1'h0", spikes: B},
    {name: "bit_cnt", val: "4'd0", at: B, bus: d("0 1 2 3 4 5 6 7 8 9 0 1 2 3 4 5 6 7 8 9 0 1 2 3")},
    {name: "tx", val: "1'h1", port: 2, level: 1, at: [38, 464, 512, 559, 607, 938, 986, 1081], last: 1}
];

function box(x, plus){
    return '<rect x="' + x + '.5" y="4.5" width="9" height="9" rx="1" fill="#f4f4fa" stroke="#b0b4c8"/>' +
        '<path d="M' + (x + 2) + ' 9.5h6' + (plus ? 'M' + (x + 5) + '.5 6v6' : '') + '" stroke="#000" shape-rendering="crispEdges"/>';
}
function diamond(x, c){
    return '<path d="M' + (x - 7) + ' 9l7-7v7z" fill="' + c[0] + '"/><path d="M' + x + ' 2l7 7h-7z" fill="' + c[1] + '"/>' +
        '<path d="M' + (x - 7) + ' 9h7v7z" fill="' + c[2] + '"/><path d="M' + x + ' 16l7-7h-7z" fill="' + c[3] + '"/>' +
        '<path d="M' + (x - 4) + ' 9l4-4 4 4-4 4z" fill="' + c[4] + '"/>';
}
function treeIcon(s){
    if(s.root){
        return '<svg viewBox="0 0 39 17"><path d="M15 9.5h6M28.5 12v5" stroke="#ddd"/>' + box(5, false) +
            diamond(28, ["#ff9a8a", "#e03030", "#d02020", "#900c0c", "#f03a34"]) + '</svg>';
    }
    var out = '<svg viewBox="0 0 57 17"><path d="M28.5 0V' + (s.last ? 9 : 17) + 'M28 9.5h11" fill="none" stroke="#ddd"/>';
    if(s.bus) out += box(23, true);
    out += diamond(45, ["#7fdcf8", "#2f9ad2", "#1e90cc", "#06608e", "#14b4ee"]);
    if(s.port){
        var x = s.port == 1 ? 38 : 45;
        out += '<path d="M' + x + ' 10.5h4v-2l4 4-4 4v-2h-4z" fill="#7df000" stroke="#1c5a10" stroke-width=".6"/>';
    }
    return out + '</svg>';
}
document.getElementById("names").innerHTML = signals.map(function(s){
    return '<li' + (s.root ? ' class="root"' : '') + '>' + treeIcon(s) + s.name + '</li>';
}).join("");
document.getElementById("values").innerHTML = signals.map(function(s){
    return '<li>' + (s.val || "") + '</li>';
}).join("");

function label(x, c, t){
    return '<text x="' + x + '" y="' + (c + 5) + '">' + t + '</text>';
}
function drawBus(s, c){
    var m = c + 0.5, hi = m - 6, lo = m + 6, out = "", p = "";
    s.bus.forEach(function(t, i){
        var first = i == 0, last = i == s.bus.length - 1;
        var x0 = first ? START : s.at[i - 1], x1 = last ? END : s.at[i];
        if(t == "#"){
            out += '<path d="M' + x0 + ' ' + (c - 6) + 'H' + x1 + 'v13H' + x0 + 'z" fill="#b4ffb4"/>' +
                '<path d="M' + x0 + ' ' + m + 'H' + x1 + '" stroke="#000"/>';
            return;
        }
        var l = x0 + (first ? 0 : 2), r = x1 - (last ? 0 : 1);
        p += 'M' + l + ' ' + hi + 'H' + r + 'M' + l + ' ' + lo + 'H' + r;
        if(!first) p += 'M' + (x0 + 1.5) + ' ' + hi + 'v3M' + (x0 + 0.5) + ' ' + (m - 3) + 'v6M' + (x0 + 1.5) + ' ' + lo + 'v-3';
        if(!last) p += 'M' + (x1 - 0.5) + ' ' + hi + 'v3M' + (x1 + 0.5) + ' ' + (m - 3) + 'v6M' + (x1 - 0.5) + ' ' + lo + 'v-3';
        out += label(x0 + (first ? 5 : 4), c, t);
    });
    return out + '<path class="bus" d="' + p + '"/>';
}
function drawWave(){
    var out = "", k, x;
    for(k = 0; k < 24; k++){
        x = Math.round(44 + 45.53 * k) + 0.5;
        out += '<path class="gridline" d="M' + x + ' 0V478"/>';
    }
    signals.forEach(function(s, i){
        var c = 10 + 17 * i, hi = c - 5.5, lo = c + 6.5, p;
        if(s.root){
            out += '<rect x="5" y="' + (c - 6) + '" width="80" height="15"/>' + label(7, c, "( " + s.name + " )");
        }else if(s.clk){
            out += '<rect x="' + START + '" y="' + (c - 5) + '" width="' + (END - START) + '" height="12" fill="#00ff00"/>';
        }else if(s.spikes){
            p = 'M' + (START + 1) + ' ' + lo + 'H' + END;
            s.spikes.forEach(function(x){ p += 'M' + (x + 0.5) + ' ' + (c - 5) + 'V' + lo; });
            out += '<path class="trace" d="' + p + '"/>';
        }else if(s.bus){
            out += drawBus(s, c);
        }else{
            var up = s.level;
            p = 'M' + (START + 1) + ' ' + (up ? hi : lo);
            s.at.forEach(function(x){
                up = !up;
                p += 'H' + (x + 0.5) + 'V' + (up ? hi : lo);
            });
            out += '<path class="trace" d="' + p + 'H' + END + '"/>';
        }
    });
    out += '<rect class="callout" x="116.5" y="47.5" width="397" height="36"/>';
    out += '<rect class="callout" x="546.5" y="423.5" width="394" height="39"/>';
    document.getElementById("wave").innerHTML = out;
}
function drawRuler(){
    var p = "", k, x;
    for(k = 0; k < 244; k++){
        x = Math.floor(6 + 4.553 * k) + 0.5;
        p += k % 10 == 5 ? 'M' + x + ' 0v7' : 'M' + x + ' 3v4';
    }
    document.getElementById("ruler").innerHTML = '<path class="trace" d="' + p + '"/>';
}
drawWave();
drawRuler();
```
